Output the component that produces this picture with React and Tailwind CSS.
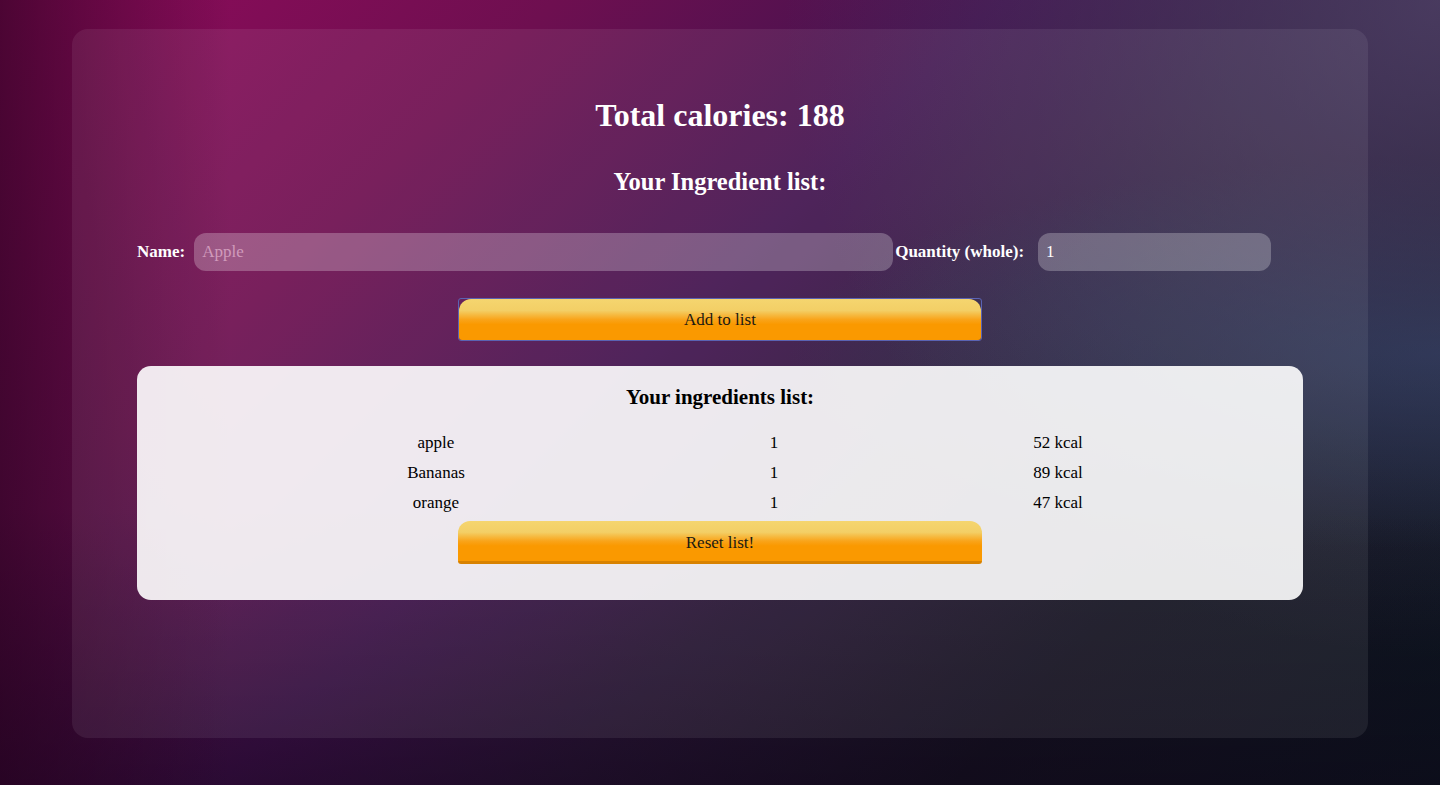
const ingredients = [
  { name: "apple", qty: 1, kcal: 52 },
  { name: "Bananas", qty: 1, kcal: 89 },
  { name: "orange", qty: 1, kcal: 47 },
];

const serif = "font-['Palatino_Linotype','Book_Antiqua','Liberation_Serif',serif]";

function GoldButton({ label, focused, bottomEdge }) {
  return (
    <div
      className={
        "mx-auto w-[524px] h-[43px] " +
        (focused ? "border border-[#5a63b3] rounded-[3px]" : "")
      }
    >
      <button
        className={
          "w-full h-full rounded-t-[12px] rounded-b-[3px] text-[17px] text-[#1a1a12] bg-[linear-gradient(to_bottom,#f5d56f_0%,#f3cf66_28%,#f9a41a_50%,#fa9900_62%,#fa9900_100%)] " +
          (bottomEdge ? "border-b-[3px] border-[#d88200] pt-[3px]" : "")
        }
      >
        {label}
      </button>
    </div>
  );
}

export default function App() {
  return (
    <div
      className={
        serif +
        " min-h-[785px] w-full pt-[29px] bg-[linear-gradient(to_right,rgba(30,0,25,0.6),rgba(30,0,25,0)_16%),linear-gradient(to_top,rgba(15,0,20,0.45),rgba(15,0,20,0)_35%),radial-gradient(circle_at_100%_0%,rgba(85,70,110,0.75),rgba(85,70,110,0)_40%),radial-gradient(ellipse_at_100%_45%,rgba(35,62,95,0.7),rgba(35,62,95,0)_32%),linear-gradient(135deg,#920b5c_0%,#6e0f50_25%,#42134f_45%,#2a1838_60%,#141522_78%,#0a1820_100%)]"
      }
    >
      <div className="mx-[72px] h-[709px] rounded-[16px] bg-white/[0.07] pt-[66px]">
        <h1 className="text-center text-[32px] leading-[40px] font-bold text-white">
          Total calories: 188
        </h1>
        <h2 className="mt-[32px] text-center text-[24.5px] leading-[30px] font-bold text-white">
          Your Ingredient list:
        </h2>

        <div className="mt-[36px] pl-[65px] flex items-center">
          <label className="text-[17px] font-bold text-white">Name:</label>
          <input
            className="ml-[9px] w-[699px] h-[38px] rounded-[12px] bg-white/[0.25] px-[8px] text-[17px] text-white placeholder:text-[#d09abb] outline-none"
            placeholder="Apple"
          />
          <label className="ml-[2px] text-[17px] font-bold text-white">
            Quantity (whole):
          </label>
          <input
            className="ml-[14px] w-[233px] h-[38px] rounded-[12px] bg-white/[0.25] px-[8px] text-[17px] text-white outline-none"
            defaultValue="1"
          />
        </div>

        <div className="mt-[27px]">
          <GoldButton label="Add to list" focused />
        </div>

        <div className="mt-[25px] mx-[65px] rounded-[14px] bg-white/[0.9] pt-[19px] pb-[36px]">
          <h3 className="text-center text-[21px] leading-[24px] font-bold text-black">
            Your ingredients list:
          </h3>
          <div className="mt-[19px] mx-auto w-[938px] grid grid-cols-[370px_306px_262px] text-[17px] text-black">
            {ingredients.map((item) => (
              <div key={item.name} className="contents">
                <div className="h-[30px] leading-[30px] text-center">{item.name}</div>
                <div className="h-[30px] leading-[30px] text-center">{item.qty}</div>
                <div className="h-[30px] leading-[30px] text-center">{item.kcal} kcal</div>
              </div>
            ))}
          </div>
          <div className="mt-[3px]">
            <GoldButton label="Reset list!" bottomEdge />
          </div>
        </div>
      </div>
    </div>
  );
}
